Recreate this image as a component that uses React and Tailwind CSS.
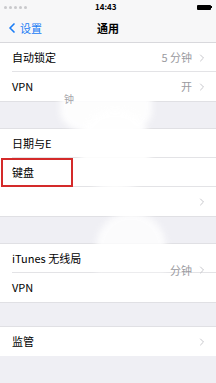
import { ChevronLeft, ChevronRight } from "lucide-react";

const font = { fontFamily: '"Noto Sans CJK SC", "Noto Sans", sans-serif' };

function Row({ label, detail, chevron = true, last = false }) {
  return (
    <div className="relative flex h-[29px] items-center bg-white pl-3 pr-2">
      <span className="text-[11px] text-black">{label}</span>
      <div className="ml-auto flex items-center gap-1 text-[11px] text-[#9a9aa0]">
        {detail && <span>{detail}</span>}
        {chevron && <ChevronRight className="h-3 w-3 text-[#c7c7cc]" strokeWidth={2} />}
      </div>
      {!last && <div className="absolute bottom-0 left-3 right-0 h-px bg-[#e3e3e6]" />}
    </div>
  );
}

function Gap({ h }) {
  return <div className={`${h} border-y border-[#e0e0e4] bg-[#efeff4]`} />;
}

export default function App() {
  return (
    <div className="relative h-[383px] w-[216px] overflow-hidden bg-[#efeff4]" style={font}>
      {/* status bar */}
      <div className="flex h-[14px] items-center bg-[#f7f7f8] px-1">
        <div className="flex items-center gap-[2px]">
          {[0, 1, 2, 3, 4].map((i) => (
            <span key={i} className="h-[3px] w-[3px] rounded-full bg-[#c9c9cc]" />
          ))}
        </div>
        <span className="ml-[68px] text-[8px] font-semibold text-black">14:43</span>
        <div className="ml-auto flex items-center">
          <div className="h-[5px] w-[14px] rounded-[1px] bg-black" />
          <div className="h-[2px] w-[1px] bg-black" />
        </div>
      </div>

      {/* nav bar */}
      <div className="flex h-[29px] items-center border-b border-[#d8d8dc] bg-[#f7f7f8] pl-1">
        <ChevronLeft className="h-4 w-4 text-[#1a7cf5]" strokeWidth={2.5} />
        <span className="text-[11px] text-[#1a7cf5]">设置</span>
        <span className="ml-[55px] text-[11px] font-semibold text-black">通用</span>
      </div>

      <Row label="自动锁定" detail="5 分钟" />
      <Row label="VPN" detail="开" last />

      <Gap h="h-[28px]" />

      <Row label="日期与E" chevron={false} />
      <Row label="键盘" chevron={false} />
      <Row label="" last />

      <Gap h="h-[28px]" />

      <div className="relative">
        <Row label="iTunes 无线局" chevron={false} />
        <div className="absolute right-2 top-[18px] z-10 flex items-center gap-1 text-[11px] text-[#9a9aa0]">
          <span>分钟</span>
          <ChevronRight className="h-3 w-3 text-[#c7c7cc]" strokeWidth={2} />
        </div>
      </div>
      <Row label="VPN" chevron={false} last />

      <Gap h="h-[25px]" />

      <Row label="监管" last />

      {/* erased white blobs */}
      <div className="pointer-events-none absolute left-[60px] top-[78px] h-[56px] w-[92px] rounded-[40%] bg-white opacity-90 blur-[3px]" />
      <div className="pointer-events-none absolute left-[80px] top-[110px] h-[80px] w-[70px] rounded-[45%] bg-white opacity-90 blur-[3px]" />
      <div className="pointer-events-none absolute left-[96px] top-[212px] h-[60px] w-[70px] rounded-t-full bg-white opacity-80 blur-[3px]" />

      {/* leftover text on top of blob */}
      <span className="absolute left-[64px] top-[91px] z-10 text-[10px] text-[#a6a6aa]">钟</span>

      {/* highlight box */}
      <div className="pointer-events-none absolute left-[1px] top-[158px] z-10 h-[29px] w-[72px] border-2 border-[#d42a2a]" />
    </div>
  );
}
